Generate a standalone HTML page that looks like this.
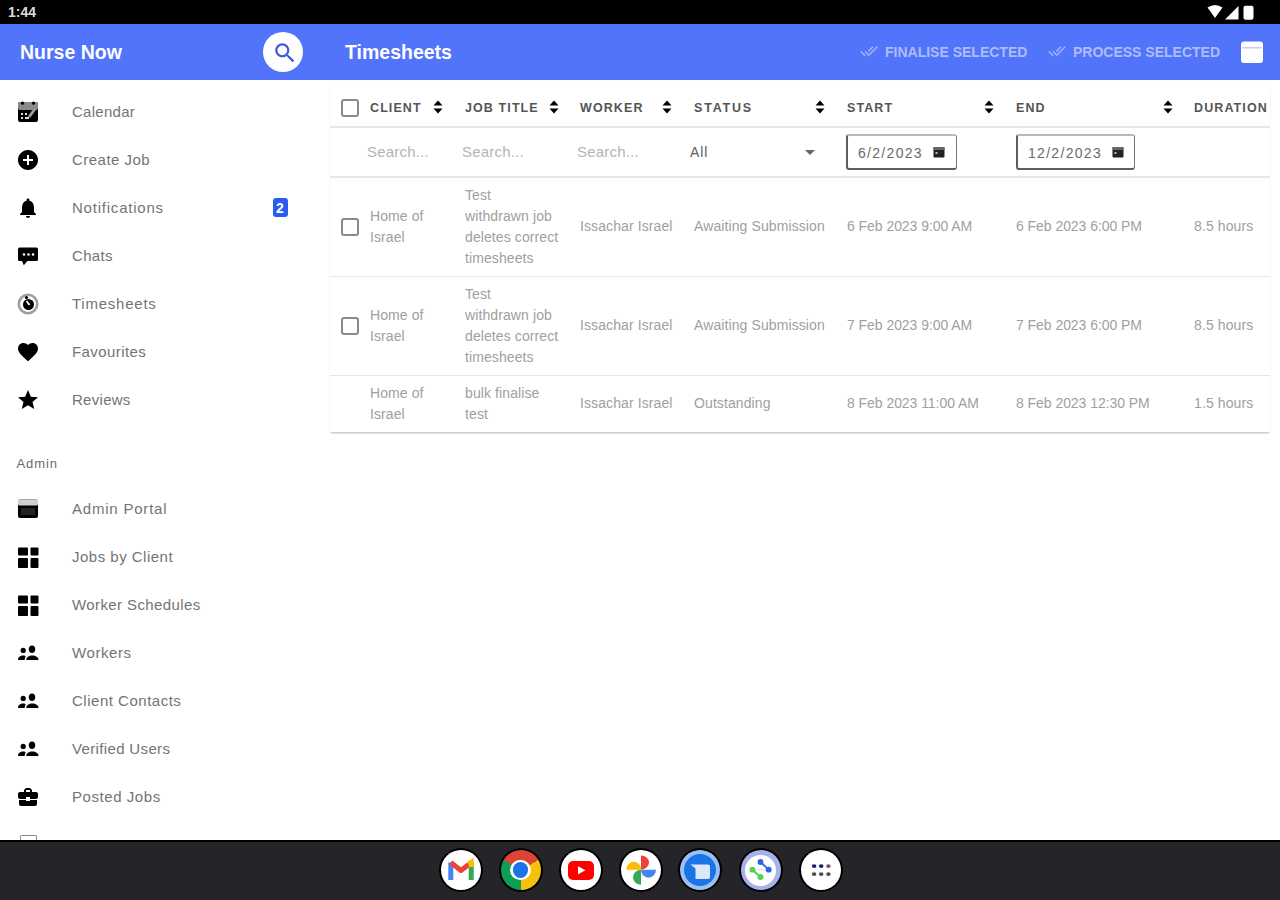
<!DOCTYPE html><html><head><meta charset="utf-8"><style>
*{margin:0;padding:0;box-sizing:border-box}
html,body{width:1280px;height:900px;overflow:hidden;background:#fff;font-family:"Liberation Sans",sans-serif;position:relative}
.a{position:absolute}
.t{position:absolute;white-space:nowrap}
.ni{position:absolute;left:72px;font-size:15px;color:#747474;letter-spacing:0.2px}
.ic{position:absolute;left:16px;width:24px;height:24px}
.hd{position:absolute;top:101px;font-size:12.5px;font-weight:bold;color:#555;letter-spacing:1.1px}
.so{position:absolute;top:100px;width:10px;height:14px}
.sr{position:absolute;top:143px;font-size:15px;color:#b4b4b4;letter-spacing:0.2px}
.c{position:absolute;font-size:14px;color:#a0a0a0;line-height:21px;white-space:nowrap;letter-spacing:0.1px}
.sp{position:absolute;left:330px;width:940px;height:1px;background:#e6e6e6}
.cb{position:absolute;left:341px;width:18px;height:18px;border:2px solid #8a8a8a;border-radius:3px}
.dk{position:absolute;top:848px;width:44px;height:44px;border-radius:50%;background:#000;padding:2px}
.dk>div{width:40px;height:40px;border-radius:50%;overflow:hidden;position:relative}
</style></head><body>
<div class="a" style="left:0;top:0;width:1280px;height:24px;background:#000"></div>
<div class="t" style="left:8px;top:4px;font-size:14px;font-weight:bold;color:#dcdcdc">1:44</div>
<svg class="a" style="left:1206px;top:4px" width="50" height="17" viewBox="0 0 50 17">
<path d="M1.5 3.5 Q9 -1.5 16.5 3.5 L9 14 Z" fill="#fff"/>
<path d="M19 15.5 L32.5 2 L32.5 15.5 Z" fill="#fff"/>
<rect x="37.5" y="1.8" width="10" height="14" rx="2" fill="#fff"/>
</svg>
<div class="a" style="left:0;top:24px;width:1280px;height:56px;background:#5174fa"></div>
<div class="t" style="left:20px;top:41px;font-size:19.5px;font-weight:bold;color:#fff">Nurse Now</div>
<div class="a" style="left:263px;top:32px;width:40px;height:40px;border-radius:50%;background:#fff"></div>
<svg class="a" style="left:271.7px;top:40.3px" width="26" height="26" viewBox="0 0 24 24"><path fill="#3f58dc" d="M15.5 14h-.79l-.28-.27C15.41 12.59 16 11.11 16 9.5 16 5.91 13.09 3 9.5 3S3 5.91 3 9.5 5.91 16 9.5 16c1.61 0 3.09-.59 4.23-1.57l.27.28v.79l5 4.99L20.49 19l-4.99-5zm-6 0C7.01 14 5 11.99 5 9.5S7.01 5 9.5 5 14 7.01 14 9.5 11.99 14 9.5 14z"/></svg>
<div class="t" style="left:345px;top:41px;font-size:19.5px;font-weight:bold;color:#fff">Timesheets</div>
<svg class="a" style="left:859.7px;top:41.8px" width="18" height="18" viewBox="0 0 24 24"><path fill="#a5b5fb" d="M18 7l-1.41-1.41-6.34 6.34 1.41 1.41L18 7zm4.24-1.41L11.66 16.17 7.48 12l-1.41 1.41L11.66 19l12-12-1.42-1.41zM.41 13.41L6 19l1.41-1.41L1.83 12 .41 13.41z"/></svg>
<svg class="a" style="left:1048px;top:41.8px" width="18" height="18" viewBox="0 0 24 24"><path fill="#a5b5fb" d="M18 7l-1.41-1.41-6.34 6.34 1.41 1.41L18 7zm4.24-1.41L11.66 16.17 7.48 12l-1.41 1.41L11.66 19l12-12-1.42-1.41zM.41 13.41L6 19l1.41-1.41L1.83 12 .41 13.41z"/></svg>
<div class="t" style="left:885px;top:44px;font-size:14px;font-weight:bold;color:#aebcfb;letter-spacing:0px">FINALISE SELECTED</div>
<div class="t" style="left:1073px;top:44px;font-size:14px;font-weight:bold;color:#aebcfb;letter-spacing:0px">PROCESS SELECTED</div>
<svg class="a" style="left:1241px;top:41px" width="22" height="22" viewBox="0 0 22 22"><rect x="0" y="0.5" width="22" height="21.5" rx="3" fill="#fff"/><rect x="1.5" y="6" width="19" height="1.5" fill="#c8cdf5"/></svg>
<svg class="ic" style="top:100px" viewBox="0 0 24 24" fill="#000"><rect x="2" y="2" width="20" height="20" rx="2" fill="#000"/><rect x="2" y="2" width="20" height="8" rx="2" fill="#8a8a8a"/><circle cx="6.5" cy="3.2" r="1.6" fill="#000"/><circle cx="17.5" cy="3.2" r="1.6" fill="#000"/><rect x="5" y="13" width="2" height="2" fill="#ddd"/><rect x="9" y="13" width="2" height="2" fill="#ddd"/><rect x="5" y="17" width="2" height="2" fill="#ddd"/><rect x="9" y="17" width="4" height="2" fill="#ddd"/><path d="M12 16 L18 8 L20 10 L14 18Z" fill="#9a9a9a"/></svg>
<div class="ni t" style="top:103px;letter-spacing:0.27px">Calendar</div>
<svg class="ic" style="top:148px" viewBox="0 0 24 24" fill="#000"><path d="M12 2C6.48 2 2 6.48 2 12s4.48 10 10 10 10-4.48 10-10S17.52 2 12 2zm5 11h-4v4h-2v-4H7v-2h4V7h2v4h4v2z"/></svg>
<div class="ni t" style="top:151px;letter-spacing:0.48px">Create Job</div>
<svg class="ic" style="top:196px" viewBox="0 0 24 24" fill="#000"><path d="M12 22c1.1 0 2-.9 2-2h-4c0 1.1.89 2 2 2zm6-6v-5c0-3.07-1.64-5.64-4.5-6.32V4c0-.83-.67-1.5-1.5-1.5s-1.5.67-1.5 1.5v.68C7.63 5.36 6 7.92 6 11v5l-2 2v1h16v-1l-2-2z"/></svg>
<div class="ni t" style="top:199px;letter-spacing:0.78px">Notifications</div>
<svg class="ic" style="top:244px" viewBox="0 0 24 24" fill="#000"><rect x="2" y="3.6" width="20" height="13.4" rx="1.6"/><path d="M5.8 16.5 L11.8 16.5 L7.8 21.2 Z"/><circle cx="8" cy="10.5" r="1.25" fill="#fff"/><circle cx="12.5" cy="10.5" r="1.25" fill="#fff"/><circle cx="17" cy="10.5" r="1.25" fill="#fff"/></svg>
<div class="ni t" style="top:247px;letter-spacing:0.33px">Chats</div>
<svg class="ic" style="top:292px" viewBox="0 0 24 24" fill="#000"><circle cx="12" cy="12" r="9.2" fill="none" stroke="#a0a0a0" stroke-width="2.6"/><circle cx="12.5" cy="12.5" r="5.5" fill="#000"/><circle cx="10.5" cy="5.5" r="1.6" fill="#000"/><path d="M10.5 9 L13.5 13" stroke="#fff" stroke-width="1.8"/></svg>
<div class="ni t" style="top:295px;letter-spacing:0.76px">Timesheets</div>
<svg class="ic" style="top:340px" viewBox="0 0 24 24" fill="#000"><path d="M12 21.35l-1.45-1.32C5.4 15.36 2 12.28 2 8.5 2 5.42 4.42 3 7.5 3c1.74 0 3.41.81 4.5 2.09C13.09 3.81 14.76 3 16.5 3 19.58 3 22 5.42 22 8.5c0 3.78-3.4 6.86-8.55 11.54L12 21.35z"/></svg>
<div class="ni t" style="top:343px;letter-spacing:0.42px">Favourites</div>
<svg class="ic" style="top:388px" viewBox="0 0 24 24" fill="#000"><path d="M12 17.27L18.18 21l-1.64-7.03L22 9.24l-7.19-.61L12 2 9.19 8.63 2 9.24l5.46 4.73L5.82 21z"/></svg>
<div class="ni t" style="top:391px;letter-spacing:0.28px">Reviews</div>
<div class="a" style="left:273px;top:198px;width:15px;height:19px;border-radius:3px;background:#2a5cf0"></div>
<div class="t" style="left:276px;top:200px;font-size:14px;font-weight:bold;color:#fff">2</div>
<div class="t" style="left:16.5px;top:456px;font-size:13px;color:#6a6a6a;letter-spacing:0.9px">Admin</div>
<svg class="ic" style="top:497px" viewBox="0 0 24 24" fill="#000"><rect x="2" y="2.5" width="20" height="18.5" rx="2" fill="#000"/><rect x="2" y="2.5" width="20" height="6" rx="1.5" fill="#cfcfcf"/><rect x="5" y="11" width="14" height="7" fill="#222"/></svg>
<div class="ni t" style="top:500px;letter-spacing:0.79px">Admin Portal</div>
<svg class="ic" style="top:545px" viewBox="0 0 24 24" fill="#000"><rect x="2" y="2.5" width="10" height="8" rx="1"/><rect x="14.5" y="2.5" width="8" height="8" rx="1"/><rect x="2" y="13" width="10" height="10" rx="1"/><rect x="14.5" y="13" width="8" height="10" rx="1"/></svg>
<div class="ni t" style="top:548px;letter-spacing:0.49px">Jobs by Client</div>
<svg class="ic" style="top:593px" viewBox="0 0 24 24" fill="#000"><rect x="2" y="2.5" width="10" height="8" rx="1"/><rect x="14.5" y="2.5" width="8" height="8" rx="1"/><rect x="2" y="13" width="10" height="10" rx="1"/><rect x="14.5" y="13" width="8" height="10" rx="1"/></svg>
<div class="ni t" style="top:596px;letter-spacing:0.40px">Worker Schedules</div>
<svg class="ic" style="top:641px" viewBox="0 0 24 24" fill="#000"><circle cx="7.2" cy="9.4" r="2.6"/><ellipse cx="16" cy="8.3" rx="3.2" ry="3.7"/><path d="M2 19 C2 16.3 4.3 14.6 7 14.6 C8.3 14.6 9.4 15 9.6 15.2 C9.2 16.4 8.8 17.6 8.6 19 Z"/><path d="M10.2 19 C10.2 16.4 13 14.6 16.3 14.6 C19.6 14.6 22.5 16.4 22.5 19 Z"/></svg>
<div class="ni t" style="top:644px;letter-spacing:0.58px">Workers</div>
<svg class="ic" style="top:689px" viewBox="0 0 24 24" fill="#000"><circle cx="7.2" cy="9.4" r="2.6"/><ellipse cx="16" cy="8.3" rx="3.2" ry="3.7"/><path d="M2 19 C2 16.3 4.3 14.6 7 14.6 C8.3 14.6 9.4 15 9.6 15.2 C9.2 16.4 8.8 17.6 8.6 19 Z"/><path d="M10.2 19 C10.2 16.4 13 14.6 16.3 14.6 C19.6 14.6 22.5 16.4 22.5 19 Z"/></svg>
<div class="ni t" style="top:692px;letter-spacing:0.51px">Client Contacts</div>
<svg class="ic" style="top:737px" viewBox="0 0 24 24" fill="#000"><circle cx="7.2" cy="9.4" r="2.6"/><ellipse cx="16" cy="8.3" rx="3.2" ry="3.7"/><path d="M2 19 C2 16.3 4.3 14.6 7 14.6 C8.3 14.6 9.4 15 9.6 15.2 C9.2 16.4 8.8 17.6 8.6 19 Z"/><path d="M10.2 19 C10.2 16.4 13 14.6 16.3 14.6 C19.6 14.6 22.5 16.4 22.5 19 Z"/></svg>
<div class="ni t" style="top:740px;letter-spacing:0.35px">Verified Users</div>
<svg class="ic" style="top:785px" viewBox="0 0 24 24" fill="#000"><path d="M10 16v-1H3.01L3 19c0 1.11.89 2 2 2h14c1.11 0 2-.89 2-2v-4h-7v1h-4zm10-9h-4.01V5l-2-2h-4l-2 2v2H4c-1.1 0-2 .9-2 2v3c0 1.1.9 2 2 2h6v-2h4v2h6c1.1 0 2-.9 2-2V9c0-1.1-.9-2-2-2zm-6 0h-4V5h4v2z"/></svg>
<div class="ni t" style="top:788px;letter-spacing:0.56px">Posted Jobs</div>
<div class="a" style="left:20px;top:835px;width:17px;height:6px;border:1.5px solid #888;border-bottom:none;border-radius:2px 2px 0 0"></div>
<div class="a" style="left:330px;top:88px;width:940px;height:344px;background:#fff;box-shadow:0 2px 2px -1px rgba(0,0,0,0.28),0 0 1px rgba(0,0,0,0.1)"></div>
<div class="cb" style="top:99px"></div>
<div class="hd t" style="left:370px">CLIENT</div>
<svg class="a" style="left:432.8px;top:100px" width="10" height="14" viewBox="0 0 10 14"><path d="M0.5 5.5 L5 0.5 L9.5 5.5Z M0.5 8.5 L5 13.5 L9.5 8.5Z" fill="#000"/></svg>
<div class="hd t" style="left:465px">JOB TITLE</div>
<svg class="a" style="left:549.3px;top:100px" width="10" height="14" viewBox="0 0 10 14"><path d="M0.5 5.5 L5 0.5 L9.5 5.5Z M0.5 8.5 L5 13.5 L9.5 8.5Z" fill="#000"/></svg>
<div class="hd t" style="left:580px">WORKER</div>
<svg class="a" style="left:662.0px;top:100px" width="10" height="14" viewBox="0 0 10 14"><path d="M0.5 5.5 L5 0.5 L9.5 5.5Z M0.5 8.5 L5 13.5 L9.5 8.5Z" fill="#000"/></svg>
<div class="hd t" style="left:694px;letter-spacing:1.8px">STATUS</div>
<svg class="a" style="left:814.7px;top:100px" width="10" height="14" viewBox="0 0 10 14"><path d="M0.5 5.5 L5 0.5 L9.5 5.5Z M0.5 8.5 L5 13.5 L9.5 8.5Z" fill="#000"/></svg>
<div class="hd t" style="left:847px">START</div>
<svg class="a" style="left:984.2px;top:100px" width="10" height="14" viewBox="0 0 10 14"><path d="M0.5 5.5 L5 0.5 L9.5 5.5Z M0.5 8.5 L5 13.5 L9.5 8.5Z" fill="#000"/></svg>
<div class="hd t" style="left:1016px">END</div>
<svg class="a" style="left:1163.0px;top:100px" width="10" height="14" viewBox="0 0 10 14"><path d="M0.5 5.5 L5 0.5 L9.5 5.5Z M0.5 8.5 L5 13.5 L9.5 8.5Z" fill="#000"/></svg>
<div class="hd t" style="left:1194px">DURATION</div>
<div class="sp" style="top:126px;height:2px"></div>
<div class="sr t" style="left:367px">Search...</div>
<div class="sr t" style="left:462px">Search...</div>
<div class="sr t" style="left:577px">Search...</div>
<div class="t" style="left:690px;top:144px;font-size:14px;color:#606060;letter-spacing:0.9px">All</div>
<svg class="a" style="left:805px;top:150px" width="10" height="5" viewBox="0 0 10 5"><path d="M0 0 L10 0 L5 5Z" fill="#666"/></svg>
<div class="a" style="left:846px;top:134px;width:111px;height:36px;border:2px solid #5e5e5e;border-right:1.6px solid #777;border-top:2.5px solid #b8b8b8;border-radius:3px"></div>
<div class="a" style="left:1016px;top:134px;width:119px;height:36px;border:2px solid #5e5e5e;border-right:1.6px solid #777;border-top:2.5px solid #b8b8b8;border-radius:3px"></div>
<div class="t" style="left:858px;top:145px;font-size:14px;color:#6a6a6a;letter-spacing:1.3px">6/2/2023</div>
<div class="t" style="left:1028px;top:145px;font-size:14px;color:#6a6a6a;letter-spacing:1.3px">12/2/2023</div>
<svg class="a" style="left:933px;top:146px" width="12" height="12" viewBox="0 0 12 12"><rect x="0.5" y="1" width="11" height="10.5" rx="1" fill="#222"/><rect x="0.5" y="1" width="11" height="3" fill="#666"/><rect x="2.5" y="6" width="2" height="2" fill="#bbb"/></svg>
<svg class="a" style="left:1112px;top:146px" width="12" height="12" viewBox="0 0 12 12"><rect x="0.5" y="1" width="11" height="10.5" rx="1" fill="#222"/><rect x="0.5" y="1" width="11" height="3" fill="#666"/><rect x="2.5" y="6" width="2" height="2" fill="#bbb"/></svg>
<div class="sp" style="top:176px;height:2px"></div>
<div class="cb" style="top:218px"></div>
<div class="c" style="left:370px;top:206px">Home of<br>Israel</div>
<div class="c" style="left:465px;top:185px">Test<br>withdrawn job<br>deletes correct<br>timesheets</div>
<div class="c" style="left:580px;top:216px">Issachar Israel</div>
<div class="c" style="left:694px;top:216px">Awaiting Submission</div>
<div class="c" style="left:847px;top:216px;letter-spacing:-0.05px">6 Feb 2023 9:00 AM</div>
<div class="c" style="left:1016px;top:216px;letter-spacing:-0.05px">6 Feb 2023 6:00 PM</div>
<div class="c" style="left:1194px;top:216px">8.5 hours</div>
<div class="sp" style="top:276px"></div>
<div class="cb" style="top:317px"></div>
<div class="c" style="left:370px;top:305px">Home of<br>Israel</div>
<div class="c" style="left:465px;top:284px">Test<br>withdrawn job<br>deletes correct<br>timesheets</div>
<div class="c" style="left:580px;top:315px">Issachar Israel</div>
<div class="c" style="left:694px;top:315px">Awaiting Submission</div>
<div class="c" style="left:847px;top:315px;letter-spacing:-0.05px">7 Feb 2023 9:00 AM</div>
<div class="c" style="left:1016px;top:315px;letter-spacing:-0.05px">7 Feb 2023 6:00 PM</div>
<div class="c" style="left:1194px;top:315px">8.5 hours</div>
<div class="sp" style="top:375px"></div>
<div class="c" style="left:370px;top:383px">Home of<br>Israel</div>
<div class="c" style="left:465px;top:383px">bulk finalise<br>test</div>
<div class="c" style="left:580px;top:393px">Issachar Israel</div>
<div class="c" style="left:694px;top:393px">Outstanding</div>
<div class="c" style="left:847px;top:393px;letter-spacing:-0.05px">8 Feb 2023 11:00 AM</div>
<div class="c" style="left:1016px;top:393px;letter-spacing:-0.05px">8 Feb 2023 12:30 PM</div>
<div class="c" style="left:1194px;top:393px">1.5 hours</div>
<div class="a" style="left:0;top:840px;width:1280px;height:60px;background:#252429;border-top:2px solid #000"></div>
<div class="dk" style="left:438.5px"><div style="background:#fff"><svg width="40" height="40" viewBox="0 0 40 40"><path d="M9.8 30 V12.5" stroke="#4285f4" stroke-width="5"/><path d="M30.2 30 V12.5" stroke="#34a853" stroke-width="5"/><path d="M9.8 12.5 L20 20.5 L30.2 12.5" fill="none" stroke="#ea4335" stroke-width="5" stroke-linejoin="round"/><path d="M27.5 14.5 L30.2 12.5 L30.2 17" stroke="#fbbc04" stroke-width="5"/></svg></div></div>
<div class="dk" style="left:498.5px"><div style="background:conic-gradient(from 300deg,#db4437 0deg 120deg,#f4c20d 120deg 240deg,#0f9d58 240deg 360deg)"><div style="position:absolute;left:9.6px;top:9.6px;width:20.8px;height:20.8px;border-radius:50%;background:#fff"></div><div style="position:absolute;left:12.2px;top:12.2px;width:15.6px;height:15.6px;border-radius:50%;background:#1a73e8"></div></div></div>
<div class="dk" style="left:558.5px"><div style="background:#fff"><div style="position:absolute;left:7px;top:10.5px;width:26px;height:19px;border-radius:5px;background:#f00"></div><svg style="position:absolute;left:0;top:0" width="40" height="40"><path d="M17 16.2 L24.5 20.2 L17 24.2Z" fill="#fff"/></svg></div></div>
<div class="dk" style="left:618.5px"><div style="background:#fff"><svg width="40" height="40" viewBox="0 0 40 40"><path d="M20 19.7 V5.5 A 8 7.1 0 0 1 20 19.7 Z" fill="#ea4335"/><path d="M20 19.7 H5.5 A 7.25 8 0 0 1 20 19.7 Z" fill="#fbbc04"/><path d="M20 19.7 H35 A 7.5 8 0 0 1 20 19.7 Z" fill="#4285f4"/><path d="M20 19.7 V34.7 A 8 7.5 0 0 1 20 19.7 Z" fill="#34a853"/></svg></div></div>
<div class="dk" style="left:678.3px"><div style="background:#9dc0f2"><div style="position:absolute;left:4px;top:4px;width:32px;height:32px;border-radius:50%;background:#1b73e8"></div><svg style="position:absolute;left:0;top:0" width="40" height="40"><path d="M10.5 14.5 H28 A2 2 0 0 1 30 16.5 V27 A2 2 0 0 1 28 29 H15.5 V18.5 Z" fill="#dde6fb"/></svg></div></div>
<div class="dk" style="left:738.5px"><div style="background:#a9b1ea"><div style="position:absolute;left:4.5px;top:4.5px;width:31px;height:31px;border-radius:50%;background:#fff"></div><svg style="position:absolute;left:0;top:0" width="40" height="40"><path d="M19.5 12 L27.7 19.7" stroke="#3d6ff0" stroke-width="2"/><path d="M11.4 19.7 L19.5 27" stroke="#5ad04a" stroke-width="2"/><path d="M11.4 19.7 L27.7 19.7" stroke="#dfe8f5" stroke-width="1.5"/><circle cx="19.5" cy="12" r="2.9" fill="#2f62ea"/><circle cx="27.7" cy="19.7" r="2.9" fill="#2f62ea"/><circle cx="11.4" cy="19.7" r="2.9" fill="#5ad04a"/><circle cx="19.5" cy="27" r="3" fill="#5ad04a"/></svg></div></div>
<div class="dk" style="left:798.5px"><div style="background:#fff"><svg width="40" height="40"><ellipse cx="13.1" cy="16.1" rx="2.3" ry="1.9" fill="#1c1a7a"/><ellipse cx="20.2" cy="16.1" rx="2.3" ry="1.9" fill="#1c1a7a"/><ellipse cx="27.4" cy="16.1" rx="2.3" ry="1.9" fill="#7a5268"/><ellipse cx="13.1" cy="24.1" rx="2.3" ry="1.9" fill="#4a4a58"/><ellipse cx="20.2" cy="24.1" rx="2.3" ry="1.9" fill="#4a4a58"/><ellipse cx="27.4" cy="24.1" rx="2.3" ry="1.9" fill="#4a4a58"/></svg></div></div>
</body></html>
